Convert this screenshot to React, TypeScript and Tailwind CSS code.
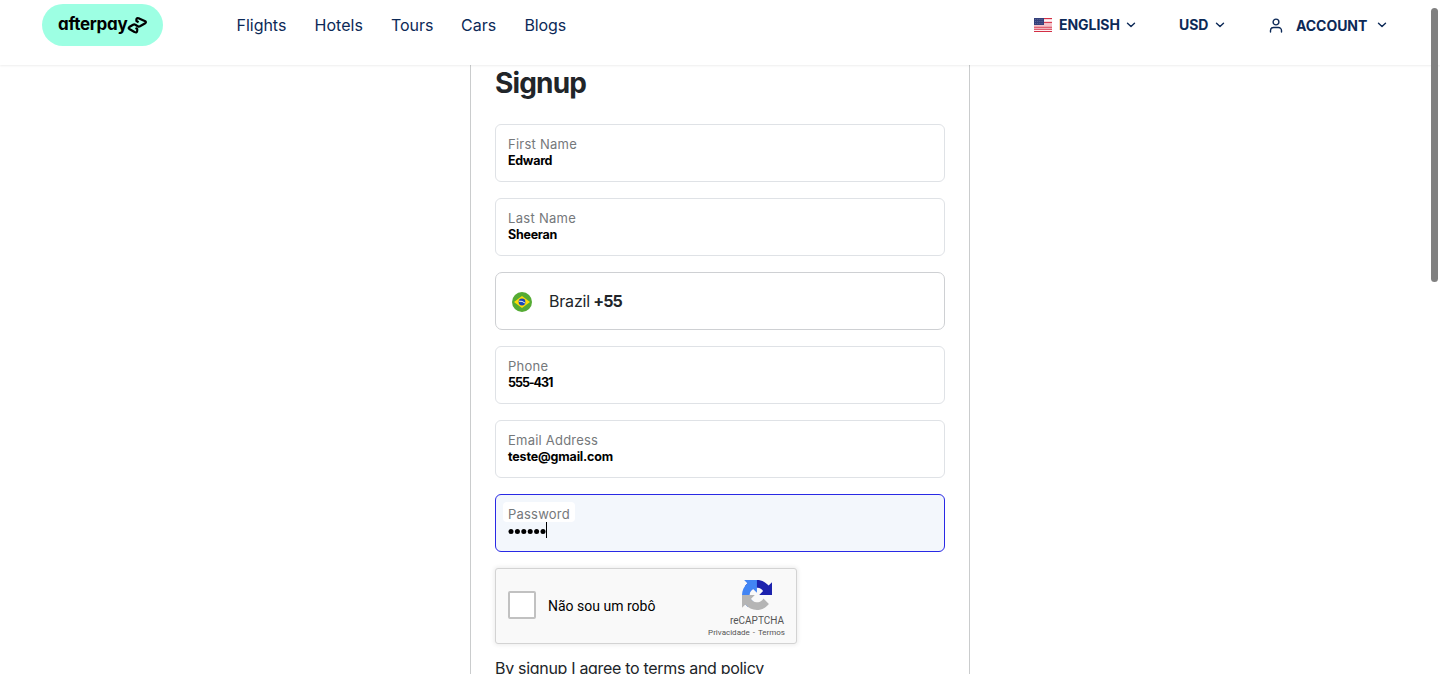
import React from "react";

const links = [
  { label: "Flights", cls: "w-[50px] tracking-[-0.02px]" },
  { label: "Hotels", cls: "w-[48.5px] tracking-[0.05px]" },
  { label: "Tours", cls: "w-[42px] tracking-[-0.05px]" },
  { label: "Cars", cls: "w-[35.5px] tracking-[0.05px]" },
  { label: "Blogs", cls: "w-[42px] tracking-[-0.15px]" },
];

function Chevron() {
  return (
    <svg width="10" height="6" viewBox="0 0 10 6" fill="none" stroke="#0c2957" strokeWidth="1.4" strokeLinecap="round" strokeLinejoin="round" className="shrink-0">
      <path d="M1.5 1.2 5 4.6 8.5 1.2" />
    </svg>
  );
}

function UsFlag() {
  return (
    <svg width="18" height="14" viewBox="0 0 18 14" className="shrink-0">
      <rect width="18" height="14" fill="#f7d3d8" />
      <path d="M0 .5h18M0 4.6h18M0 9.2h18M0 11.3h18M0 13.5h18" stroke="#d32f45" strokeWidth="1" />
      <path d="M0 2.5h18M0 12.4h18" stroke="#fff" strokeWidth=".8" />
      <path d="M0 6.2h18M0 7.8h18" stroke="#f3bcc4" strokeWidth="1" />
      <rect width="10" height="7" fill="#34407b" />
      <path d="M1 1.5h8M1 3.5h8M1 5.5h8" stroke="#7780aa" strokeWidth=".7" strokeDasharray=".8 1.1" />
    </svg>
  );
}

function BrazilFlag() {
  return (
    <svg width="20" height="20" viewBox="0 0 20 20" className="mt-[2px] shrink-0">
      <circle cx="10" cy="10" r="10" fill="#55ab34" />
      <path d="M10 4 18 10 10 16 2 10Z" fill="#ffdd09" />
      <circle cx="10" cy="10" r="3.4" fill="#1a47b8" />
      <path d="M7 9.2q3.2-.5 5.9 1.8" stroke="#e8effa" strokeWidth="1" fill="none" />
    </svg>
  );
}

function RecaptchaLogo() {
  return (
    <svg width="30" height="30" viewBox="0 0 64 64" className="shrink-0">
      <path d="M64 31.955l-.033-1.370V4.687l-7.160 7.160C50.948 4.674 42.033.093 32.050.093c-10.400 0-19.622 4.960-25.458 12.640l11.736 11.860a15.550 15.550 0 0 1 4.754-5.334c2.050-1.600 4.952-2.906 8.968-2.906.485 0 .860.057 1.135.163 4.976.393 9.288 3.140 11.828 7.124l-8.307 8.307L64 31.953" fill="#1c22ad" />
      <path d="M31.862.094l-1.370.033H4.594l7.160 7.160C4.580 13.147 0 22.060 0 32.046c0 10.400 4.960 19.622 12.640 25.458L24.500 45.768a15.550 15.550 0 0 1-5.334-4.754c-1.600-2.050-2.906-4.952-2.906-8.968 0-.485.057-.860.163-1.135.393-4.976 3.140-9.288 7.124-11.828l8.307 8.307L31.860.095" fill="#4285f4" />
      <path d="M.001 32.045l.033 1.370v25.898l7.160-7.160c5.860 7.173 14.774 11.754 24.760 11.754 10.400 0 19.622-4.960 25.458-12.640l-11.736-11.860a15.550 15.550 0 0 1-4.754 5.334c-2.050 1.600-4.952 2.906-8.968 2.906-.485 0-.860-.057-1.135-.163-4.976-.393-9.288-3.140-11.828-7.124l8.307-8.307c-10.522.040-22.400.066-27.295-.005" fill="#b5b5b5" />
    </svg>
  );
}

function Field({ label, value, labelCls, cls }: { label: string; value: string; labelCls: string; cls: string }) {
  return (
    <div className="flex h-[58px] flex-col rounded-[6px] border border-[#dfe2e6] bg-white px-3 pt-[11px]">
      <span className={"text-[13px] leading-[17px] text-[#75787b] " + labelCls}>{label}</span>
      <span className={"text-[12.5px] font-bold leading-4 text-black " + cls}>{value}</span>
    </div>
  );
}

export default function App() {
  return (
    <div className="relative flex h-[674px] w-full flex-col overflow-hidden bg-white font-['Inter',sans-serif] text-[#212529]">
      <header className="relative z-10 flex h-[65px] shrink-0 items-start bg-white pl-[42px] shadow-[0_1px_2px_rgba(0,0,0,0.07)]">
        <div className="mt-1 flex h-[42px] w-[121px] items-center rounded-full bg-[#9dffe3] pl-4">
          <span className="w-[69px] whitespace-nowrap pb-[3px] text-[17px] font-bold leading-5 tracking-[-0.3px] text-black [font-feature-settings:'cv11']">afterpay</span>
          <svg width="21" height="19" viewBox="0 0 21 19" fill="none" stroke="#000" strokeWidth="2.2" strokeLinejoin="round" strokeLinecap="butt" className="shrink-0">
            <path d="M11.600 6.200 9.400 5V3.300Q9.700 1.600 11.600 2.200L18.200 5.300Q19.600 6.200 18.200 7.200L13 10.300Q11.900 10.900 10.800 10.200L8.300 8.700Q7.200 8.100 6.100 8.700L2.300 11Q1 12 2.300 13L7.500 16Q10.200 17 10.200 14.800V12.900L8.500 12" />
          </svg>
        </div>
        <nav className="ml-[73.500px] mt-[13px] flex gap-[28px] text-[16px] leading-6 text-[#0c2957]">
          {links.map((l) => (
            <a key={l.label} className={"whitespace-nowrap " + l.cls}>{l.label}</a>
          ))}
        </nav>
        <div className="ml-auto mr-[53px] flex h-[50px] items-center text-[14px] font-bold text-[#0c2957]">
          <UsFlag />
          <span className="ml-[7px] w-[61px] whitespace-nowrap pb-px tracking-[-0.05px]">ENGLISH</span>
          <span className="ml-[6px] flex"><Chevron /></span>
          <span className="ml-[43px] w-[29px] whitespace-nowrap pb-px tracking-[-0.05px]">USD</span>
          <span className="ml-[7px] flex"><Chevron /></span>
          <svg width="14" height="15" viewBox="0 0 14 15" fill="none" stroke="#0c2957" strokeWidth="1.400" strokeLinecap="round" className="ml-[44px] shrink-0">
            <circle cx="7" cy="4" r="2.900" />
            <path d="M1.500 14v-1.500a3 3 0 0 1 3-3h5a3 3 0 0 1 3 3V14" />
          </svg>
          <span className="ml-[13px] w-[72px] whitespace-nowrap pt-px tracking-[-0.05px]">ACCOUNT</span>
          <span className="ml-[9px] flex"><Chevron /></span>
        </div>
      </header>

      <main className="mx-auto flex w-[500px] flex-1 flex-col border-x border-[#cacccd] px-6">
        <h1 className="h-[59px] text-[28px] font-bold leading-[36px] tracking-[-0.85px]">Signup</h1>
        <form className="flex flex-col gap-4">
          <Field label="First Name" value="Edward" labelCls="tracking-[0.25px]" cls="tracking-[-0.3px]" />
          <Field label="Last Name" value="Sheeran" labelCls="tracking-[0.3px]" cls="tracking-[-0.25px]" />
          <div className="flex h-[58px] items-center rounded-[7px] border border-[#ced0d3] pl-4">
            <BrazilFlag />
            <span className="ml-[17px] whitespace-nowrap text-[16px] leading-6 tracking-[-0.2px]">
              Brazil <b className="-ml-px tracking-[-0.9px]">+55</b>
            </span>
          </div>
          <Field label="Phone" value="555-431" labelCls="tracking-[0.25px]" cls="tracking-[-1.05px]" />
          <Field label="Email Address" value="teste@gmail.com" labelCls="tracking-[0.22px]" cls="tracking-[-0.16px]" />
          <div className="flex h-[58px] flex-col items-start rounded-[6px] border border-[#2929e5] bg-[#f3f7fc] pl-[7px] pt-[7px]">
            <span className="h-5 w-[72px] rounded-[4px] bg-white pl-[5px] pt-1 text-[13px] leading-[17px] tracking-[0.22px] text-[#75787b]">Password</span>
            <div className="flex h-4 items-center pl-[5px]">
              <svg width="38" height="16" viewBox="0 0 38 16" fill="#000">
                {[0, 1, 2, 3, 4, 5].map((i) => (
                  <circle key={i} cx={3 + i * 6.4} cy="9.500" r="2.500" />
                ))}
              </svg>
              <span className="h-4 w-px bg-black" />
            </div>
          </div>
          <div className="flex h-[76px] w-[302px] rounded-[3px] border border-[#d3d3d3] bg-[#f9f9f9] pl-3 pr-[11px] font-['Roboto',sans-serif] shadow-[0_0_4px_1px_rgba(0,0,0,0.08)]">
            <span className="mt-[22px] h-7 w-7 shrink-0 rounded-[2px] border-2 border-[#c1c1c1] bg-white" />
            <span className="ml-3 mt-[29px] whitespace-nowrap text-[14px] leading-[17px] text-black">Não sou um robô</span>
            <div className="ml-auto flex flex-col items-end pt-[11px] text-[#555]">
              <span className="mr-[13px] flex"><RecaptchaLogo /></span>
              <span className="mr-px mt-[5px] text-[10px] leading-3">reCAPTCHA</span>
              <span className="whitespace-nowrap text-[8px] leading-[11px]">Privacidade<span className="px-[3px]">-</span>Termos</span>
            </div>
          </div>
        </form>
        <p className="mt-3 whitespace-nowrap text-[16px] leading-6 tracking-[-0.310px]">By signup I agree to terms and policy</p>
      </main>

      <div className="absolute left-[1431px] top-2 z-20 h-[274px] w-[7px] rounded-full bg-[#808080]" />
    </div>
  );
}
